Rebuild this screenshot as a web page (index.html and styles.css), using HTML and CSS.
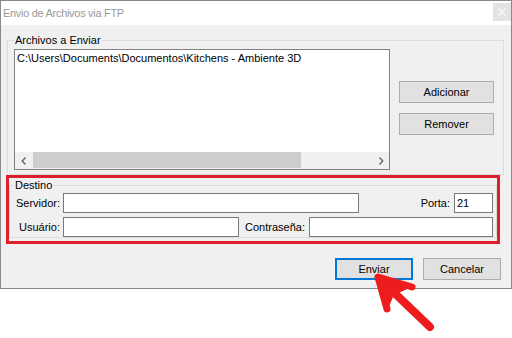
FILE: index.html
```html
<!DOCTYPE html>
<html lang="es">
<head>
    <meta charset="UTF-8">
    <meta name="viewport" content="width=device-width, initial-scale=1.0">
    <title>Envio de Archivos via FTP</title>
    <link rel="stylesheet" href="styles.css">
</head>
<body>
    <div class="window">
        <div class="titlebar">
            <span class="title">Envio de Archivos via FTP</span>
            <span class="close">
                <svg width="8" height="8" viewBox="0 0 8 8"><path d="M0.5 0.5 L7.5 7.5 M7.5 0.5 L0.5 7.5" stroke="#fbfbfb" stroke-width="1.2"/></svg>
            </span>
        </div>
        <div class="content">
            <fieldset class="group files">
                <legend>Archivos a Enviar</legend>
                <div class="files-row">
                    <div class="listbox">
                        <div class="list-items">
                            <div class="item">C:\Users\Documents\Documentos\Kitchens - Ambiente 3D</div>
                        </div>
                        <div class="hscroll">
                            <span class="scroll-btn">
                                <svg width="6" height="8" viewBox="0 0 6 8"><path d="M4.5 0.5 L1.2 4 L4.5 7.5" fill="none" stroke="#606060" stroke-width="1.3"/></svg>
                            </span>
                            <div class="track"><div class="thumb"></div></div>
                            <span class="scroll-btn">
                                <svg width="6" height="8" viewBox="0 0 6 8"><path d="M1.5 0.5 L4.8 4 L1.5 7.5" fill="none" stroke="#606060" stroke-width="1.3"/></svg>
                            </span>
                        </div>
                    </div>
                    <div class="side-buttons">
                        <button>Adicionar</button>
                        <button>Remover</button>
                    </div>
                </div>
            </fieldset>
            <div class="highlight">
                <fieldset class="group dest">
                    <legend>Destino</legend>
                    <div class="row">
                        <label class="lbl" for="servidor">Servidor:</label>
                        <input type="text" id="servidor" class="servidor">
                        <label class="lbl-porta" for="porta">Porta:</label>
                        <input type="text" id="porta" class="porta" value="21">
                    </div>
                    <div class="row">
                        <label class="lbl" for="usuario">Usuário:</label>
                        <input type="text" id="usuario" class="usuario">
                        <label class="lbl-pass" for="senha">Contraseña:</label>
                        <input type="text" id="senha" class="senha">
                    </div>
                </fieldset>
            </div>
            <div class="actions">
                <button class="default">Enviar</button>
                <button>Cancelar</button>
            </div>
        </div>
    </div>
    <svg class="pointer" width="512" height="338" viewBox="0 0 512 338">
        <path d="M378 277 L393 297 L388 309 Z M378 277 L412 287 L396 294 Z" fill="#ee1c1c"/>
        <path d="M387 309 L378 277 L412 287" fill="none" stroke="#ee1c1c" stroke-width="7" stroke-linecap="round" stroke-linejoin="round"/>
        <path d="M382 281 L430 327" fill="none" stroke="#ee1c1c" stroke-width="8" stroke-linecap="round"/>
    </svg>
</body>
</html>
```

FILE: styles.css
```css
body {
    margin: 0;
    background: white;
    font-family: "Liberation Sans", Arial, sans-serif;
    font-size: 11px;
    color: #000;
}
.window {
    width: 510px;
    height: 287px;
    border: 1px solid #8a8a8a;
    display: flex;
    flex-direction: column;
}
.titlebar {
    height: 24px;
    background: white;
    display: flex;
    justify-content: space-between;
    align-items: flex-start;
}
.title {
    color: #999;
    font-size: 11px;
    letter-spacing: -0.3px;
    margin: 6px 0 0 2px;
}
.close {
    width: 18px;
    height: 18px;
    margin-top: 2px;
    background: #e3e3e3;
    display: flex;
    align-items: center;
    justify-content: center;
}
.content {
    flex: 1;
    background: #f0f0f0;
    padding: 8px 7px 0 6px;
}
fieldset.group {
    margin: 0;
    border: 1px solid #dcdcdc;
    min-width: 0;
}
legend {
    padding: 0 1px;
    line-height: 14px;
}
.files {
    padding: 2px 6px 4px 6px;
}
.files-row {
    display: flex;
    gap: 9px;
}
.listbox {
    width: 374px;
    height: 119px;
    border: 1px solid #828282;
    background: white;
    display: flex;
    flex-direction: column;
}
.list-items {
    flex: 1;
    padding: 1px 2px;
}
.item {
    line-height: 15px;
}
.hscroll {
    height: 17px;
    background: #f0f0f0;
    display: flex;
}
.scroll-btn {
    width: 17px;
    display: flex;
    align-items: center;
    justify-content: center;
}
.track {
    flex: 1;
    padding-left: 1px;
}
.thumb {
    width: 268px;
    height: 16px;
    background: #cdcdcd;
}
.side-buttons {
    margin-top: 32px;
    display: flex;
    flex-direction: column;
    gap: 10px;
}
button {
    font-family: inherit;
    font-size: 11px;
    background: #e1e1e1;
    border: 1px solid #adadad;
    border-radius: 0;
    padding: 0;
    color: #000;
}
.side-buttons button {
    width: 95px;
    height: 22px;
}
.highlight {
    margin-left: -1px;
    width: 488px;
    height: 63px;
    border: 3px solid #dc1f2a;
}
.dest {
    border-width: 1px 0 0 0;
    padding: 0 3px 0 4px;
}
.row {
    display: flex;
    align-items: center;
    height: 20px;
    margin-top: 4px;
}
.dest legend + .row {
    margin-top: 1px;
}
.lbl {
    width: 46px;
    text-align: right;
    margin-right: 3px;
}
input {
    box-sizing: border-box;
    height: 20px;
    border: 1px solid #7a7a7a;
    background: white;
    font-family: inherit;
    font-size: 11px;
    padding: 0 2px;
    margin: 0;
    border-radius: 0;
    outline: none;
}
.servidor {
    width: 296px;
}
.lbl-porta {
    margin-left: auto;
    margin-right: 4px;
}
.porta {
    width: 39px;
}
.usuario {
    width: 176px;
}
.lbl-pass {
    flex: 1;
    text-align: right;
    padding-right: 4px;
}
.senha {
    width: 184px;
}
.actions {
    margin-top: 14px;
    padding-right: 3px;
    display: flex;
    justify-content: flex-end;
    gap: 10px;
}
.actions button {
    width: 78px;
    height: 22px;
}
.actions .default {
    border: 2px solid #0078d7;
}
.pointer {
    position: absolute;
    left: 0;
    top: 0;
    pointer-events: none;
}
```
